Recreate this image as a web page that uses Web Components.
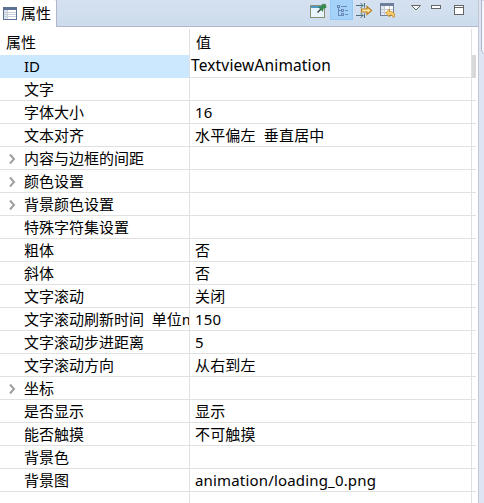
<!DOCTYPE html>
<html lang="zh-CN"><head><meta charset="utf-8"><title>属性</title>
<style>html,body{margin:0;width:484px;height:503px;overflow:hidden;background:#dfe4f5}</style></head>
<body><properties-view></properties-view>
<script>
const define = (name, html) => {
  const t = document.createElement('template');
  t.innerHTML = html;
  customElements.define(name, class extends HTMLElement {
    constructor() {
      super();
      this.attachShadow({mode: 'open'}).append(t.content.cloneNode(true));
    }
  });
};

define('view-tab', `<style>
:host{display:flex;align-items:center;box-sizing:border-box;width:56px;height:27px;background:#fff;padding-left:3px;gap:3px;white-space:nowrap;border-top-right-radius:2px}
svg{flex:none}span{line-height:27px}
</style><svg width="15" height="14" shape-rendering="crispEdges"><path d="M0 0h14v13H0z" fill="#5d7194"/><path d="M1 3h12v9H1z" fill="#fff"/><path d="M1 3h3v9H1z" fill="#dfe5ef"/><path d="M1 5h12v1H1zM1 7h12v1H1zM1 9h12v1H1zM4 3h1v9H4z" fill="#c9d0dc"/></svg><span><slot></slot></span>`);

define('view-toolbar', `<style>
:host{display:block;width:178px;height:26px}svg{display:block}
</style><svg width="178" height="26" viewBox="300 0 178 26">
<g shape-rendering="crispEdges"><path d="M310 5h15v13h-15z" fill="#8a9078"/><path d="M311 8h13v9h-13z" fill="#e8f5fd"/><path d="M311 6h13v2h-13z" fill="#4c9ac4"/></g>
<path d="M317.500 12.500l3.500-3.500" stroke="#333" stroke-width="1.3"/><path d="M318.500 7l3 .2 1-3 3 .2.6 3-3 1-.4 3z" fill="#36904a" stroke="#28703a" stroke-width=".6"/>
<path d="M330 0h23v20h-23z" fill="#92c9f6"/><path d="M331 0h21v19h-21z" fill="#a5d2f8"/>
<g fill="none" stroke="#6a88b8" shape-rendering="crispEdges"><path d="M338.500 8v7.500h3M338.500 10.500h3"/><path d="M337.500 5.500h2v2h-2zM341.500 9.500h2v2h-2zM341.500 13.500h2v2h-2zM341 6.500h6M345 10.500h3M345 14.500h3"/></g>
<g stroke="#4c6b7d" fill="none"><path d="M356 5.500h7M356 15.500h7M364.500 3v4.500M364.500 13.500v4.500"/><path d="M360.500 3l2.500 2.500-2.500 2.500M360.500 13l2.500 2.500-2.500 2.500"/></g><path d="M361.500 9h5.500V6.500l4.500 4-4.500 4V12h-5.500z" fill="#ffe8a4" stroke="#b67b18" stroke-width="1.2"/>
<g shape-rendering="crispEdges"><path d="M380 3h14v13h-14z" fill="#6e7f9b"/><path d="M381 6h12v9h-12z" fill="#fff"/><path d="M381 6h3v9h-3z" fill="#e3e8f0"/><path d="M381 9h12v1h-12zM381 12h12v1h-12zM384 6h1v9h-1zM389 6h1v9h-1z" fill="#c3cbd8"/></g><path d="M385.500 13l4-4v2.500c4 0 5.500 1.500 5 5l-1.500 1c0-2-1-2.500-3.500-2.500v2z" fill="#f8cd70" stroke="#c28625" stroke-width=".8"/>
<path d="M411.500 5.500h9l-4.500 4.500z" fill="#fff" stroke="#666"/>
<path d="M431.500 5.500h9v3h-9zM454.500 5.500h9v9h-9zM454 7.500h10" fill="#fff" stroke="#666" shape-rendering="crispEdges"/></svg>`);

define('property-row', `<style>
:host{display:grid;grid-template-columns:189px 1px 281px 1px 4px;height:22px;border-bottom:1px solid #e1e1e1;line-height:22px}
.n,.v{overflow:hidden;white-space:pre}
.n{display:grid;grid-template-columns:24px 1fr}.n b{font-weight:400;overflow:hidden}
.v{padding-left:5px;letter-spacing:.17px}i{background:#e1e1e1;height:23px}
svg{display:none}:host([group]) svg{display:block}
:host([selected]) .n{background:#cce8ff}:host([selected]) .v{padding-left:1px;font-size:15.5px;line-height:20px;letter-spacing:.15px}
:host([selected]) u{background:#d9d9d9}
:host([head]){height:26px;line-height:27px;border:0}
:host([head]) .n{grid-template-columns:6px 1fr}:host([head]) .v{padding-left:6px}:host([head]) i{height:26px}
:host([last]){border:0}
</style><div class="n"><span><svg width="24" height="22"><path d="M10 7.500l4 4.500-4 4.500" fill="none" stroke="#a0a0a0" stroke-width="2"/></svg></span><b><slot name="name"></slot></b></div><i></i><div class="v"><slot></slot></div><i></i><u></u>`);

const rows = [
  ['ID','TextviewAnimation','selected'],['文字',''],['字体大小','16'],['文本对齐','水平偏左  垂直居中'],
  ['内容与边框的间距','','group'],['颜色设置','','group'],['背景颜色设置','','group'],['特殊字符集设置',''],
  ['粗体','否'],['斜体','否'],['文字滚动','关闭'],['文字滚动刷新时间  单位m','150'],['文字滚动步进距离','5'],
  ['文字滚动方向','从右到左'],['坐标','','group'],['是否显示','显示'],['能否触摸','不可触摸'],['背景色',''],
  ['背景图','animation/loading_0.png'],['','','last']];
define('properties-view', `<style>
:host{display:grid;grid-template-columns:478px 1px 5px;height:503px;font:15px/22px "Noto Sans","Noto Sans CJK SC",sans-serif;color:#000}
.panel{background:#fff;overflow:hidden}
header{display:flex;height:27px;background:linear-gradient(#d5e1f0,#ccdcec)}
.bar{flex:1;display:flex;justify-content:flex-end;border-bottom:1px solid #b3b7ce;border-left:1px solid #b3b7ce}
main{padding-top:2px;width:476px}
.edge{background:#c3c6d2}
.next{padding-left:1px}.next svg{display:block}
</style><div class="panel"><header><view-tab>属性</view-tab><div class="bar"><view-toolbar></view-toolbar></div></header>
<main><property-row head><span slot="name">属性</span>值</property-row>${rows.map(r => `<property-row ${r[2] || ''}><span slot="name">${r[0]}</span>${r[1]}</property-row>`).join('')}</main></div><div class="edge"></div>
<div class="next"><svg width="4" height="56"><path d="M1.500 0v50q0 2 3 4V0z" fill="#f4f6fc" stroke="#b3b7ce"/></svg></div>`);
</script></body></html>
